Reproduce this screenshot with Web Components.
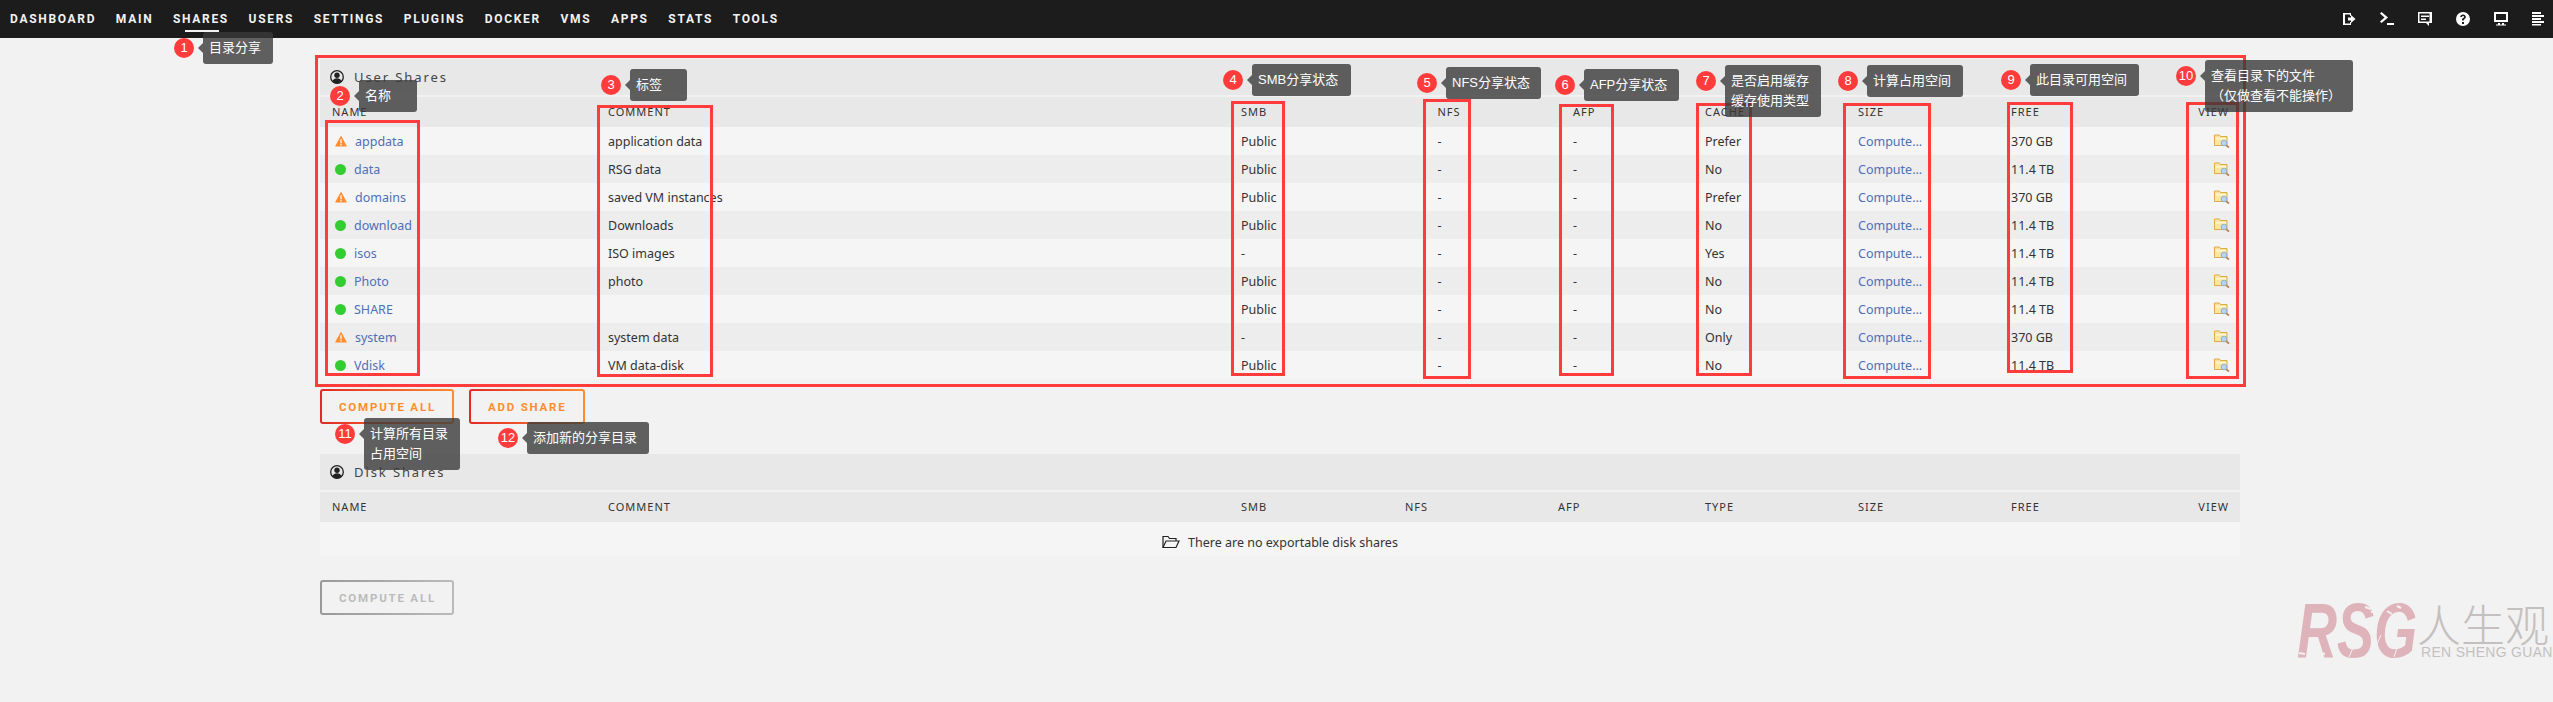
<!DOCTYPE html>
<html lang="zh">
<head>
<meta charset="utf-8">
<title>Shares</title>
<style>
    html, body { margin: 0; height: 100%; overflow: hidden; }
    body {
        position: relative;
        background: #f2f2f2;
        color: #333;
        font: 12.5px "Noto Sans", "Noto Sans CJK SC", sans-serif;
    }
    a { color: #4f6fb8; text-decoration: none; }
</style>
</head>
<body>
<top-nav></top-nav>
<share-page></share-page>

<mark-box x="315" y="55" w="1931" h="332"></mark-box>
<mark-box x="325" y="120" w="95" h="256"></mark-box>
<mark-box x="597" y="105" w="116" h="272"></mark-box>
<mark-box x="1231" y="101" w="54" h="275"></mark-box>
<mark-box x="1423" y="99" w="48" h="280"></mark-box>
<mark-box x="1559" y="104" w="55" h="272"></mark-box>
<mark-box x="1696" y="103" w="56" h="273"></mark-box>
<mark-box x="1843" y="103" w="88" h="276"></mark-box>
<mark-box x="2007" y="102" w="66" h="271"></mark-box>
<mark-box x="2186" y="102" w="53" h="277"></mark-box>

<note-tip n="1" x="174" y="32" w="70">目录分享</note-tip>
<note-tip n="2" x="330" y="80" w="58">名称</note-tip>
<note-tip n="3" x="601" y="69" w="57">标签</note-tip>
<note-tip n="4" x="1223" y="64" w="99">SMB分享状态</note-tip>
<note-tip n="5" x="1417" y="67" w="95">NFS分享状态</note-tip>
<note-tip n="6" x="1555" y="69" w="95">AFP分享状态</note-tip>
<note-tip n="7" x="1696" y="65" w="96">是否启用缓存<br>缓存使用类型</note-tip>
<note-tip n="8" x="1838" y="65" w="96">计算占用空间</note-tip>
<note-tip n="9" x="2001" y="64" w="109">此目录可用空间</note-tip>
<note-tip n="10" x="2176" y="60" w="148">查看目录下的文件<br>（仅做查看不能操作）</note-tip>
<note-tip n="11" x="335" y="418" w="96">计算所有目录<br>占用空间</note-tip>
<note-tip n="12" x="498" y="422" w="122">添加新的分享目录</note-tip>

<water-mark></water-mark>

<script>
const ICONS = {
    logout: '<path d="M1 1h8v3H8V2.500H3v9h5V10h1v3H1z"/><path d="M6 5.500h3V3l4.500 4L9 11V8.500H6z"/>',
    term: '<path d="M0 1.500 1.500 0 8 5.500 1.500 11 0 9.500 4.500 5.500z"/><rect x="7" y="11" width="7" height="2"/>',
    chat: '<path fill-rule="evenodd" d="M0 0h14v11h-3v3l-3-3H0zM1.500 1.500v8h10v-8z"/><rect x="3" y="3.500" width="8" height="1.500"/><rect x="3" y="6.500" width="5" height="1.500"/>',
    help: '<path fill-rule="evenodd" d="M7 0a7 7 0 1 1 0 14A7 7 0 0 1 7 0zM6 10v2h2v-2zM7 2.500C5.400 2.500 4.300 3.400 4.200 5h1.700c.1-.6.500-1 1.100-1 .6 0 1 .4 1 .9 0 .5-.3.800-.9 1.200-.8.500-1.100 1.100-1.100 2.100v.3h1.800V8.200c0-.4.200-.7.800-1.100.8-.5 1.200-1.200 1.200-2.200C9.800 3.500 8.700 2.500 7 2.500z"/>',
    monitor: '<path fill-rule="evenodd" d="M0 0h14v10H0zM2 2v6h10V2z"/><rect x="4" y="11" width="2" height="2"/><rect x="8" y="11" width="2" height="2"/><rect x="2" y="12.500" width="10" height="1"/>',
    list: '<rect y="0" width="9" height="2"/><rect y="3" width="12" height="2"/><rect y="6" width="9" height="2"/><rect y="9" width="12" height="2"/><rect y="12" width="9" height="1.500"/>',
};

window.customElements.define('top-nav', class TopNav extends HTMLElement {
    static #links = ['DASHBOARD', 'MAIN', 'SHARES', 'USERS', 'SETTINGS', 'PLUGINS', 'DOCKER', 'VMS', 'APPS', 'STATS', 'TOOLS'];
    static #style = `
        :host {
            display: flex;
            justify-content: space-between;
            align-items: center;
            height: 38px;
            padding: 0 7px 0 10px;
            box-sizing: border-box;
            background: #1c1c1c;
        }
        nav { display: flex; gap: 19.600px; }
        a {
            position: relative;
            color: #f2f2f2;
            font: 700 12px Roboto, sans-serif;
            letter-spacing: 1.700px;
            line-height: 36px;
        }
        a.on:after {
            content: "";
            position: absolute;
            left: 12px;
            right: 10px;
            bottom: 5px;
            height: 2px;
            background: #f2f2f2;
        }
        .icons { display: flex; gap: 24px; }
        svg { width: 14px; height: 14px; fill: #fff; display: block; }
    `
    constructor() {
        super();
        this.attachShadow({ mode: 'open' });
        const links = TopNav.#links.map((l) => `<a class="${l === 'SHARES' ? 'on' : ''}">${l}</a>`).join('');
        const icons = ['logout', 'term', 'chat', 'help', 'monitor', 'list']
            .map((i) => `<svg viewBox="0 0 14 14">${ICONS[i]}</svg>`).join('');
        this.shadowRoot.innerHTML = `<style>${TopNav.#style}</style><nav>${links}</nav><div class="icons">${icons}</div>`;
    }
});

window.customElements.define('sec-head', class SecHead extends HTMLElement {
    constructor() {
        super();
        this.attachShadow({ mode: 'open' });
        this.shadowRoot.innerHTML = `
            <style>
                :host {
                    display: flex;
                    align-items: center;
                    gap: 10px;
                    height: 36px;
                    padding: 0 0 1px 10px;
                    box-sizing: border-box;
                    background: #e8e8e8;
                    color: #444;
                    font-size: 13px;
                    letter-spacing: 1.900px;
                }
                svg { width: 14px; height: 14px; display: block; }
            </style>
            <svg viewBox="0 0 14 14">
                <circle cx="7" cy="7" r="6.300" fill="none" stroke="#222" stroke-width="1.300"/>
                <circle cx="7" cy="5.300" r="2.700" fill="#222"/>
                <path d="M2.500 11.500C3 9 5 8.300 7 8.300s4 .7 4.500 3.200C10 13 8.500 13.500 7 13.500S4 13 2.500 11.500z" fill="#222"/>
            </svg>
            <slot></slot>`;
    }
});

// one grid line, --cols comes from the table around it
window.customElements.define('share-row', class ShareRow extends HTMLElement {
    constructor() {
        super();
        this.attachShadow({ mode: 'open' });
        this.shadowRoot.innerHTML = `
            <style>
                :host {
                    display: grid;
                    grid-template-columns: var(--cols);
                    align-items: center;
                    height: 28px;
                    padding: 0 11px 0 12px;
                    box-sizing: border-box;
                    background: #f5f5f5;
                    white-space: nowrap;
                }
                :host(:nth-of-type(even)) { background: #ededed; }
                :host([head]) {
                    height: 30px;
                    margin-top: 2px;
                    padding-bottom: 2px;
                    background: #e8e8e8;
                    font-size: 11px;
                    letter-spacing: 1px;
                }
                ::slotted(:last-child) { justify-self: end; }
            </style>
            <slot></slot>`;
    }
});

window.customElements.define('share-name', class ShareName extends HTMLElement {
    constructor() {
        super();
        this.attachShadow({ mode: 'open' });
        const warn = this.getAttribute('status') === 'warn';
        const mark = warn
            ? '<svg viewBox="0 0 13 12"><path d="M6.500 0 13 12H0z" fill="#ff8c2f"/><rect x="5.800" y="4" width="1.400" height="4.500" fill="#fff"/><rect x="5.800" y="9.300" width="1.400" height="1.500" fill="#fff"/></svg>'
            : '<i></i>';
        this.shadowRoot.innerHTML = `
            <style>
                :host { display: flex; align-items: center; gap: 8px; margin-left: 3px; color: #4f6fb8; }
                i { width: 11px; height: 11px; border-radius: 50%; background: #33cc33; }
                svg { width: 12px; height: 12px; display: block; }
            </style>
            ${mark}<slot></slot>`;
    }
});

window.customElements.define('view-icon', class ViewIcon extends HTMLElement {
    constructor() {
        super();
        this.attachShadow({ mode: 'open' });
        this.shadowRoot.innerHTML = `
            <style>
                :host { display: block; height: 14px; margin-right: -1px; }
                svg { width: 16px; height: 14px; display: block; }
            </style>
            <svg viewBox="0 0 16 14">
                <path d="M.5 1h5l1 1.500h6.500v9H.5z" fill="#fbe6a0" stroke="#dca94e"/>
                <rect x="1.500" y="4" width="10.500" height="1.500" fill="#fff6d2"/>
                <circle cx="10" cy="9" r="2.800" fill="#b8d4ef" stroke="#8fb0d0"/>
                <path d="M12.300 11.300 15 13.600" stroke="#b98355" stroke-width="1.800"/>
            </svg>`;
    }
});

window.customElements.define('grad-button', class GradButton extends HTMLElement {
    constructor() {
        super();
        this.attachShadow({ mode: 'open' });
        this.shadowRoot.innerHTML = `
            <style>
                :host {
                    --from: #e22828;
                    --to: #ff8c2f;
                    --ink: #ff8c2f;
                    display: inline-flex;
                    align-items: center;
                    justify-content: center;
                    height: 35px;
                    padding: 0 16px 0 17px;
                    box-sizing: border-box;
                    border: 2px solid transparent;
                    border-radius: 3px;
                    background: linear-gradient(#f2f2f2, #f2f2f2) padding-box, linear-gradient(90deg, var(--from), var(--to)) border-box;
                    color: var(--ink);
                    font: 700 11.500px Roboto, sans-serif;
                    letter-spacing: 1.800px;
                    white-space: nowrap;
                }
                :host([disabled]) { --from: #999; --to: #bbb; --ink: #bbb; }
            </style>
            <slot></slot>`;
    }
});

window.customElements.define('share-page', class SharePage extends HTMLElement {
    static #style = `
        :host {
            display: block;
            width: 1920px;
            margin-left: 320px;
            padding-top: 21px;
        }
        .users { --cols: 276px 633px 196.500px 135.500px 132px 153px 153px 1fr 40px; }
        .disks { --cols: 276px 633px 164px 153px 147px 153px 153px 1fr 40px; }
        .btns { display: flex; gap: 15px; margin-top: 10px; }
        .disks { margin-top: 30px; }
        .empty {
            display: flex;
            justify-content: center;
            align-items: center;
            gap: 8px;
            height: 34px;
            padding-top: 6px;
            box-sizing: border-box;
            background: #f5f5f5;
        }
        .empty svg { width: 18px; height: 14px; display: block; }
        .bottom { margin-top: 24px; }
        a { color: #4f6fb8; }
    `
    static #shares = [
        ['appdata', 'warn', 'application data', 'Public', 'Prefer', '370 GB'],
        ['data', 'ok', 'RSG data', 'Public', 'No', '11.4 TB'],
        ['domains', 'warn', 'saved VM instances', 'Public', 'Prefer', '370 GB'],
        ['download', 'ok', 'Downloads', 'Public', 'No', '11.4 TB'],
        ['isos', 'ok', 'ISO images', '-', 'Yes', '11.4 TB'],
        ['Photo', 'ok', 'photo', 'Public', 'No', '11.4 TB'],
        ['SHARE', 'ok', '', 'Public', 'No', '11.4 TB'],
        ['system', 'warn', 'system data', '-', 'Only', '370 GB'],
        ['Vdisk', 'ok', 'VM data-disk', 'Public', 'No', '11.4 TB'],
    ];
    static #head(names) {
        return `<share-row head>${names.map((n) => `<span>${n}</span>`).join('')}</share-row>`;
    }
    constructor() {
        super();
        this.attachShadow({ mode: 'open' });
        const rows = SharePage.#shares.map(([name, status, comment, smb, cache, free]) => `
            <share-row>
                <share-name status="${status}">${name}</share-name>
                <span>${comment}</span><span>${smb}</span><span>-</span><span>-</span><span>${cache}</span>
                <a>Compute...</a><span>${free}</span><view-icon></view-icon>
            </share-row>`).join('');
        this.shadowRoot.innerHTML = `
            <style>${SharePage.#style}</style>
            <section class="users">
                <sec-head>User Shares</sec-head>
                ${SharePage.#head(['NAME', 'COMMENT', 'SMB', 'NFS', 'AFP', 'CACHE', 'SIZE', 'FREE', 'VIEW'])}
                <div>${rows}</div>
            </section>
            <div class="btns"><grad-button>COMPUTE ALL</grad-button><grad-button>ADD SHARE</grad-button></div>
            <section class="disks">
                <sec-head>Disk Shares</sec-head>
                ${SharePage.#head(['NAME', 'COMMENT', 'SMB', 'NFS', 'AFP', 'TYPE', 'SIZE', 'FREE', 'VIEW'])}
                <div class="empty">
                    <svg viewBox="0 0 18 14" fill="none" stroke="#222" stroke-width="1.200">
                        <path d="M1 12.500V1.500h5l1.500 2h6.500V6"/><path d="M1 12.500 4 6h13l-3 6.500z"/>
                    </svg>
                    <span>There are no exportable disk shares</span>
                </div>
            </section>
            <div class="btns bottom"><grad-button disabled>COMPUTE ALL</grad-button></div>`;
    }
});

// red outline laid over the screenshot
window.customElements.define('mark-box', class MarkBox extends HTMLElement {
    constructor() {
        super();
        this.attachShadow({ mode: 'open' });
        const [x, y, w, h] = ['x', 'y', 'w', 'h'].map((a) => this.getAttribute(a));
        this.shadowRoot.innerHTML = `
            <style>
                :host {
                    position: absolute;
                    left: ${x}px;
                    top: ${y}px;
                    width: ${w}px;
                    height: ${h}px;
                    box-sizing: border-box;
                    border: 3px solid #ff3b3b;
                }
            </style>`;
    }
});

window.customElements.define('note-tip', class NoteTip extends HTMLElement {
    constructor() {
        super();
        this.attachShadow({ mode: 'open' });
        const [x, y, w] = ['x', 'y', 'w'].map((a) => this.getAttribute(a));
        this.shadowRoot.innerHTML = `
            <style>
                :host {
                    position: absolute;
                    left: ${x}px;
                    top: ${y}px;
                    display: flex;
                    align-items: flex-start;
                    gap: 9px;
                    color: #fff;
                    font: 13px/20px "Liberation Sans", "Noto Sans CJK SC", sans-serif;
                }
                b {
                    flex: none;
                    width: 20px;
                    height: 20px;
                    margin-top: 6px;
                    border-radius: 50%;
                    background: #ff3b3b;
                    font-weight: 400;
                    text-align: center;
                }
                div {
                    position: relative;
                    width: ${w}px;
                    padding: 6px 0 6px 6px;
                    box-sizing: border-box;
                    border-radius: 3px;
                    background: rgba(58, 58, 58, .8);
                    white-space: nowrap;
                }
                div:before {
                    content: "";
                    position: absolute;
                    left: -5px;
                    top: 11px;
                    border: 5px solid transparent;
                    border-left: 0;
                    border-right-color: rgba(58, 58, 58, .8);
                }
            </style>
            <b>${this.getAttribute('n')}</b><div><slot></slot></div>`;
    }
});

window.customElements.define('water-mark', class WaterMark extends HTMLElement {
    constructor() {
        super();
        this.attachShadow({ mode: 'open' });
        this.shadowRoot.innerHTML = `
            <style>
                :host {
                    position: absolute;
                    left: 2297px;
                    top: 595px;
                    width: 256px;
                    height: 70px;
                }
                .rsg {
                    position: absolute;
                    left: 0;
                    top: 5px;
                    color: #deb4ba;
                    font: italic 700 77px/60px "Liberation Sans", sans-serif;
                    transform: scaleX(.72);
                    transform-origin: 0 0;
                }
                svg { position: absolute; left: 0; top: 0; width: 120px; height: 70px; }
                .cn {
                    position: absolute;
                    left: 120px;
                    top: 6px;
                    color: #c4c0c0;
                    font: 300 44px/44px "Noto Sans CJK SC", sans-serif;
                }
                .en {
                    position: absolute;
                    left: 124px;
                    top: 50px;
                    color: #c4c0c0;
                    font: 14px/14px "Liberation Sans", sans-serif;
                    letter-spacing: .3px;
                    white-space: nowrap;
                }
            </style>
            <div class="rsg">RSG</div>
            <svg viewBox="0 0 120 70" fill="none" stroke="#f2f2f2">
                <path d="M60 44 52 62M84 40 74 62M103 44 97 62"/>
                <path d="M68 12l6 2M74 17l5-2M90 16l5 3M100 11l4 2M2 58l6 1M24 58l4 1" stroke-width="2"/>
            </svg>
            <div class="cn">人生观</div><div class="en">REN SHENG GUAN</div>`;
    }
});
</script>
</body>
</html>
